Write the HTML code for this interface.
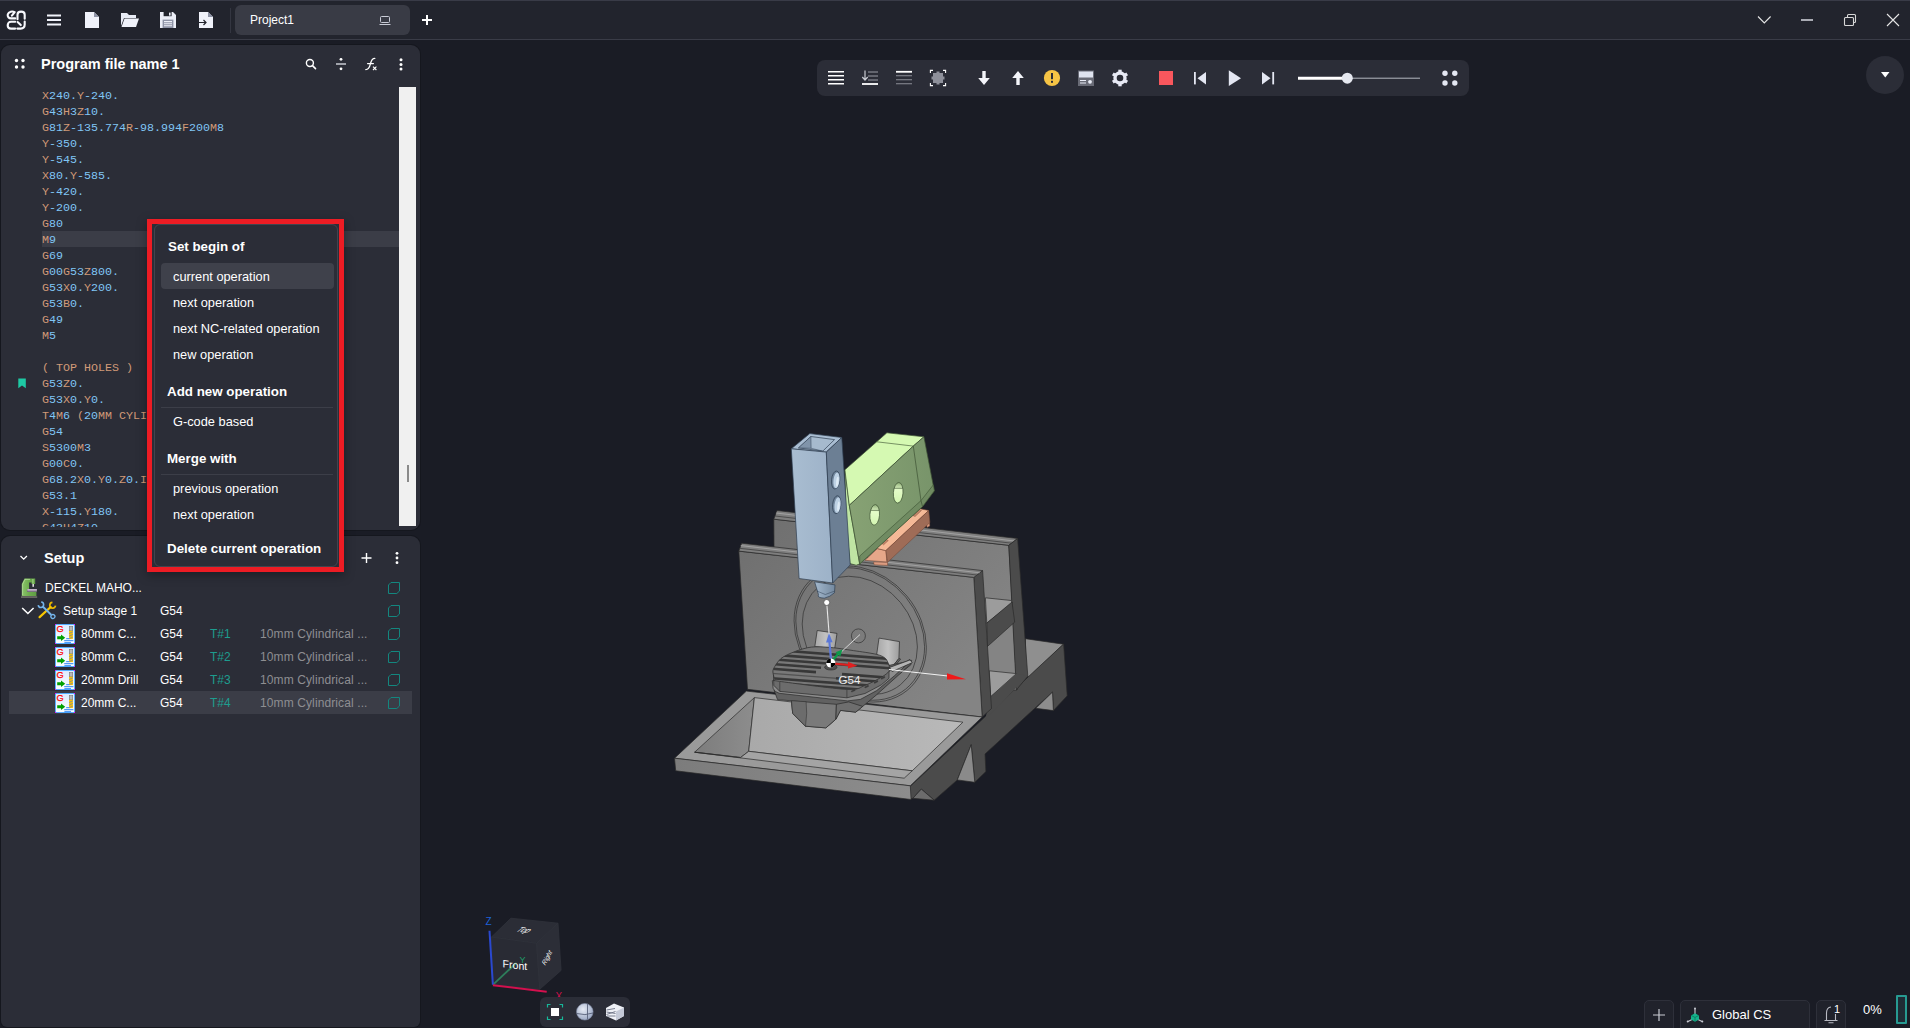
<!DOCTYPE html>
<html><head><meta charset="utf-8"><title>Project1</title>
<style>
*{box-sizing:border-box;margin:0;padding:0}
html,body{width:1910px;height:1028px;overflow:hidden;background:#1a1c25;font-family:"Liberation Sans",Arial,sans-serif;color:#fff}
body{position:relative}
svg{position:absolute;overflow:visible}
#titlebar{position:absolute;left:0;top:0;width:1910px;height:40px;background:#22242d;border-top:1px solid #393b47;border-bottom:1px solid #3a3c47}
#tab{position:absolute;left:235px;top:4px;width:175px;height:30px;background:#393b45;border-radius:6px}
#tab span{position:absolute;left:15px;top:8px;font-size:12px;color:#fff}
.panel{position:absolute;background:#2b2d37;border-radius:9px;box-shadow:0 0 0 1px #15171e}
#p1{left:1px;top:45px;width:419px;height:485px}
#p2{left:1px;top:536px;width:419px;height:491px;border-radius:9px 9px 6px 6px}
.ptitle{position:absolute;font-weight:bold;font-size:14.5px;color:#fff;white-space:nowrap;line-height:18px}
#code{position:absolute;left:41px;top:42px;width:358px;height:440px;overflow:hidden;font-family:"Liberation Mono","DejaVu Sans Mono",monospace;font-size:11.67px;line-height:16px;color:#d19a78;white-space:pre}
#code b{font-weight:normal;color:#80c6f5}
#code i{font-style:normal;display:block;height:16px;line-height:19px}
#code i.hl{background:#3b3d47}
#sb{position:absolute;left:398px;top:42px;width:17px;height:439px;background:#f0f0f0}
#sbt{position:absolute;left:406px;top:420px;width:2px;height:17px;background:#8a8a8a}
.row{position:absolute;left:8px;width:403px;height:23px;font-size:12px;color:#fff;white-space:nowrap}
.row span{position:absolute;top:5px;line-height:15px}
.row .t{color:#1d9d8f}
.row .d{color:#8e8e92;letter-spacing:.11px}
.row.sel{background:#3b3d47}
#menu{position:absolute;left:147px;top:219px;width:197px;height:353px;border:5px solid #ed1c24;background:#2b2d37;box-shadow:0 3px 10px rgba(0,0,0,.35)}
#menuin{position:absolute;left:2px;top:0px;width:184px;height:343px;border:1px solid #42444e;border-radius:6px}
.mh{position:absolute;font-weight:bold;font-size:13.35px;color:#fff;white-space:nowrap;line-height:16px}
.mi{position:absolute;left:173px;font-size:12.8px;color:#fff;white-space:nowrap;line-height:16px}
.msep{position:absolute;left:161px;width:172px;height:1px;background:#3c3e48}
.mhl{position:absolute;left:161px;top:263px;width:173px;height:26px;background:#3f414b;border-radius:4px}
#tb{position:absolute;left:817px;top:60px;width:652px;height:36px;background:#2b2d37;border-radius:8px}
#circ{position:absolute;left:1866px;top:56px;width:38px;height:38px;border-radius:19px;background:#2b2d37}
#vb{position:absolute;left:540px;top:997px;width:90px;height:30px;background:#2b2d37;border-radius:6px}
.bb{position:absolute;top:1000px;height:30px;background:#20222b;border:1px solid #2e303a;border-radius:5px 5px 0 0}

</style></head><body>
<div id="titlebar">
 <div id="tab"><span>Project1</span></div>
</div>
<svg style="left:0;top:0" width="1910" height="40" viewBox="0 0 1910 40">
 <!-- logo -->
 <g fill="none" stroke="#f8f9fd" stroke-width="2.1" stroke-linecap="round" stroke-linejoin="round">
  <path d="M11.9 15.6L14.7 12.1C12.5 11 8.6 11.4 7.8 14.2C7.2 16.8 8.8 18.4 11 18.4H15.2"/>
  <path d="M17.5 19.2V14.8C17.5 10.6 24.7 10.6 24.7 14.8V18.8"/>
  <path d="M15.2 21.8H11C6.6 21.8 6.6 28.6 11 28.6H15.2"/>
  <path d="M24.7 21.5V24.6C24.7 27.4 23 28.6 20.6 28.6H17.3"/>
  <path d="M17.6 22L20.8 25.1"/>
 </g>
 <!-- hamburger -->
 <g stroke="#f1f3fa" stroke-width="2"><path d="M47 15.5H61M47 20H61M47 24.5H61"/></g>
 <!-- new file -->
 <path d="M85 12H94L99 17V28H85Z" fill="#f0f2fa"/><path d="M94 12V17H99Z" fill="#8e93a6"/>
 <!-- open folder -->
 <path d="M121 13H127L129 15H136V18H124L121 26Z" fill="#e8ebf5"/><path d="M124.5 18.5H139L136 27H121.5Z" fill="#f0f2fa"/>
 <!-- save -->
 <path d="M160 12H173L176 15V28H160Z" fill="#eceef7"/><rect x="163.6" y="12" width="8" height="4.2" fill="#22242d"/><rect x="169" y="12.6" width="1.6" height="3" fill="#eceef7"/><rect x="162.6" y="19.6" width="10.8" height="8.4" fill="#8e93a6"/><path d="M164 21.6H172M164 23.7H172M164 25.8H172" stroke="#eef0f8" stroke-width="1.1"/>
 <!-- export -->
 <path d="M199 12H208L213 17V28H199Z" fill="#f0f2fa"/><path d="M208 12V17H213Z" fill="#8e93a6"/><path d="M199 22.5H206M203.5 20L206 22.5L203.5 25" stroke="#22242d" stroke-width="1.2" fill="none"/>
 <rect x="230" y="8" width="1" height="25" fill="#343641"/>
 <!-- tab monitor icon -->
 <rect x="380.5" y="16.5" width="9" height="6" rx="1" fill="none" stroke="#c8cbd6" stroke-width="1"/><path d="M379.5 24.5H390.5" stroke="#c8cbd6" stroke-width="1"/>
 <!-- plus -->
 <path d="M422 20H432M427 15V25" stroke="#fff" stroke-width="2"/>
 <!-- window controls -->
 <path d="M1758 16.5L1764.3 23L1770.6 16.5" fill="none" stroke="#e6e6e6" stroke-width="1.1"/>
 <path d="M1801 20H1813" stroke="#a9abb3" stroke-width="2"/>
 <rect x="1844.5" y="17.5" width="9" height="8" rx="1" fill="none" stroke="#d8d8d8" stroke-width="1.1"/><path d="M1847.5 17.5V15.5Q1847.5 14.5 1848.5 14.5H1854.5Q1855.5 14.5 1855.5 15.5V21.5Q1855.5 22.5 1854.5 22.5H1853.5" fill="none" stroke="#d8d8d8" stroke-width="1.1"/>
 <path d="M1887 14L1899 26M1899 14L1887 26" stroke="#e6e6e6" stroke-width="1.1"/>
</svg>
<div id="circ"></div>
<svg style="left:1866px;top:56px" width="38" height="38" viewBox="0 0 38 38"><path d="M15 16H23.5L19.25 21.5Z" fill="#fff"/></svg>
<div class="panel" id="p1">
 <div class="ptitle" style="left:40px;top:10px">Program file name 1</div>
 <div id="code"><i>X<b>240.</b>Y<b>-240.</b></i><i>G<b>43</b>H<b>3</b>Z<b>10.</b></i><i>G<b>81</b>Z<b>-135.774</b>R<b>-98.994</b>F<b>200</b>M<b>8</b></i><i>Y<b>-350.</b></i><i>Y<b>-545.</b></i><i>X<b>80.</b>Y<b>-585.</b></i><i>Y<b>-420.</b></i><i>Y<b>-200.</b></i><i>G<b>80</b></i><i class="hl">M<b>9</b></i><i>G<b>69</b></i><i>G<b>00</b>G<b>53</b>Z<b>800.</b></i><i>G<b>53</b>X<b>0.</b>Y<b>200.</b></i><i>G<b>53</b>B<b>0.</b></i><i>G<b>49</b></i><i>M<b>5</b></i><i></i><i>( TOP HOLES )</i><i>G<b>53</b>Z<b>0.</b></i><i>G<b>53</b>X<b>0.</b>Y<b>0.</b></i><i>T<b>4</b>M<b>6</b> (<b>20</b>MM CYLINDRICAL FLAT END MILL)</i><i>G<b>54</b></i><i>S<b>5300</b>M<b>3</b></i><i>G<b>00</b>C<b>0.</b></i><i>G<b>68.2</b>X<b>0.</b>Y<b>0.</b>Z<b>0.</b>I<b>0.</b>J<b>0.</b>K<b>0.</b></i><i>G<b>53.1</b></i><i>X<b>-115.</b>Y<b>180.</b></i><i>G<b>43</b>H<b>4</b>Z<b>10.</b></i></div>
 <div id="sb"></div><div id="sbt"></div>
</div>
<svg style="left:0;top:45px" width="420" height="485" viewBox="0 45 420 485">
 <g fill="#fff"><circle cx="16.5" cy="60.5" r="1.7"/><circle cx="23" cy="60.5" r="1.7"/><circle cx="16.5" cy="67" r="1.7"/><circle cx="23" cy="67" r="1.7"/></g>
 <circle cx="309.9" cy="63" r="3.5" fill="none" stroke="#fff" stroke-width="1.4"/><path d="M312.5 65.6L315.5 68.6" stroke="#fff" stroke-width="1.6" stroke-linecap="round"/>
 <circle cx="341" cy="59.3" r="1.4" fill="#fff"/><circle cx="341" cy="68.8" r="1.4" fill="#fff"/><path d="M336 64H346" stroke="#d5d7de" stroke-width="1.4"/>
 <path d="M365.8 69.6C369.5 69.6 369.8 66 370.6 63.2C371.4 60.2 372 58.4 374.8 58.4M367.6 63.6H373.4" fill="none" stroke="#fff" stroke-width="1.3" stroke-linecap="round"/><path d="M373 66.6L376.4 70M376.4 66.6L373 70" stroke="#fff" stroke-width="1.1"/>
 <g fill="#fff"><circle cx="401" cy="59.7" r="1.5"/><circle cx="401" cy="64.4" r="1.5"/><circle cx="401" cy="69.1" r="1.5"/></g>
 <path d="M18.3 378.5H25.8V388.3L22 385.6L18.3 388.3Z" fill="#1ec9a4"/>
</svg>
<div class="panel" id="p2">
 <div class="ptitle" style="left:43px;top:13px">Setup</div>
 <div class="row" style="top:40px"><span style="left:36px">DECKEL MAHO...</span></div>
 <div class="row" style="top:63px"><span style="left:54px">Setup stage 1</span><span style="left:151px">G54</span></div>
 <div class="row" style="top:86px"><span style="left:72px">80mm C...</span><span style="left:151px">G54</span><span class="t" style="left:201px">T#1</span><span class="d" style="left:251px">10mm Cylindrical ...</span></div>
 <div class="row" style="top:109px"><span style="left:72px">80mm C...</span><span style="left:151px">G54</span><span class="t" style="left:201px">T#2</span><span class="d" style="left:251px">10mm Cylindrical ...</span></div>
 <div class="row" style="top:132px"><span style="left:72px">20mm Drill</span><span style="left:151px">G54</span><span class="t" style="left:201px">T#3</span><span class="d" style="left:251px">10mm Cylindrical ...</span></div>
 <div class="row sel" style="top:155px"><span style="left:72px">20mm C...</span><span style="left:151px">G54</span><span class="t" style="left:201px">T#4</span><span class="d" style="left:251px">10mm Cylindrical ...</span></div>
</div>
<svg style="left:0;top:536px" width="420" height="200" viewBox="0 536 420 200">
 <defs>
  <g id="chk"><path d="M3 0.5H11.5V9L8.8 11.5H0.5V3Z" fill="none" stroke="#13877f" stroke-width="1"/></g>
  <linearGradient id="opg" x1="0" y1="0" x2="0" y2="1"><stop offset="0" stop-color="#dcecff"/><stop offset="1" stop-color="#fbfdff"/></linearGradient>
  <g id="op">
   <rect x="0.5" y="0.5" width="19" height="19" fill="url(#opg)" stroke="#55adff" stroke-width="1"/>
   <rect x="0" y="0" width="1" height="1" fill="#f0f"/><rect x="19" y="0" width="1" height="1" fill="#f0f"/><rect x="0" y="19" width="1" height="1" fill="#f0f"/><rect x="19" y="19" width="1" height="1" fill="#f0f"/>
   <text x="1.6" y="8.4" font-family="Liberation Sans,sans-serif" font-size="9.2" fill="#ff0000" stroke="#ff0000" stroke-width=".25">G</text>
   <path d="M2.2 12.2H6V10.4L10.2 13.7L6 17V15.2H2.2Z" fill="#00a000"/>
   <rect x="14.3" y="2.5" width="3.4" height="4.3" fill="#b8b8b8" stroke="#777" stroke-width=".6"/><rect x="14.1" y="6.8" width="3.8" height="8.3" fill="#f5c400"/>
   <path d="M14.1 9.6L17.9 7.8M14.1 12.2L17.9 10.4M14.1 14.8L17.9 13" stroke="#8a8a9a" stroke-width=".9"/>
   <path d="M11.2 14.7H14.1M9.2 16.7H18.4M9.4 18.7H16" stroke="#1478f0" stroke-width=".9" fill="none"/>
  </g>
 </defs>
 <path d="M20.5 556L23.7 559.2L26.9 556" fill="none" stroke="#fff" stroke-width="1.3"/>
 <path d="M361.5 558H371.5M366.5 553V563" stroke="#fff" stroke-width="1.4"/>
 <g fill="#fff"><circle cx="397" cy="553.3" r="1.4"/><circle cx="397" cy="558" r="1.4"/><circle cx="397" cy="562.7" r="1.4"/></g>
 <!-- machine icon -->
 <defs><linearGradient id="mg" x1="0" y1="0" x2="1" y2="0"><stop offset="0" stop-color="#8cc46c"/><stop offset=".5" stop-color="#6ead4e"/><stop offset="1" stop-color="#5f9c44"/></linearGradient>
 <linearGradient id="mt" x1="0" y1="0" x2="0" y2="1"><stop offset="0" stop-color="#cdbdd4"/><stop offset="1" stop-color="#8f7d98"/></linearGradient></defs>
 <g>
  <path d="M21.8 596V584L24.5 578.6H35.2V584H31.6V582.5H29.1V589H27.2V591.7H36.4V596Z" fill="url(#mg)"/>
  <path d="M22.6 595V584.3L25 579.4H30" fill="none" stroke="#b7e29c" stroke-width=".9" opacity=".8"/>
  <rect x="32.2" y="579" width="1.4" height="4.6" fill="#a5d488" opacity=".8"/>
  <rect x="27.2" y="589" width="9.7" height="2.7" fill="url(#mt)"/>
  <rect x="32.4" y="584" width="1.6" height="2.8" fill="#d9d9d9"/>
  <rect x="21" y="596.2" width="16.2" height="1.7" fill="#6d6d66"/>
 </g>
 <!-- chevron + tools -->
 <path d="M22.2 608L27.9 613.5L33.6 608" fill="none" stroke="#fff" stroke-width="1.6"/>
 <g fill="none" transform="translate(52.6 605.3) rotate(137.7)">
  <path d="M-1.9 -2.3A2.9 2.9 0 1 1 -1.9 2.3" stroke="#e8b600" stroke-width="1.7"/>
  <path d="M2.6 0H17.6" stroke="#f7c600" stroke-width="2.2" stroke-linecap="round"/>
 </g>
 <g fill="none" transform="translate(41 604.8) rotate(44.5)">
  <path d="M-1.8 -2.1A2.7 2.7 0 1 1 -1.8 2.1" stroke="#74b4ea" stroke-width="1.6"/>
  <path d="M2.4 0H14.6" stroke="#74b4ea" stroke-width="1.9"/>
  <circle cx="16.7" cy="0" r="2" stroke="#74b4ea" stroke-width="1.3"/>
 </g>
 <use href="#op" x="55" y="624"/><use href="#op" x="55" y="647"/><use href="#op" x="55" y="670"/><use href="#op" x="55" y="693"/>
 <use href="#chk" x="388" y="582"/><use href="#chk" x="388" y="605"/><use href="#chk" x="388" y="628"/><use href="#chk" x="388" y="651"/><use href="#chk" x="388" y="674"/><use href="#chk" x="388" y="697"/>
</svg>
<div id="tb"></div>
<svg style="left:817px;top:60px" width="652" height="36" viewBox="817 60 652 36">
 <!-- 1 lines -->
 <path d="M828 71.8H844M828 75.8H844M828 79.8H844M828 83.8H844" stroke="#fff" stroke-width="1.5"/>
 <!-- 2 arrow lines -->
 <path d="M868 72H878M868 76H878M868 80H878" stroke="#9b9da6" stroke-width="1"/>
 <path d="M865 70.5V79.5M862.3 77L865 80L867.7 77" stroke="#c9cbd3" stroke-width="1.2" fill="none"/>
 <path d="M862 84H878" stroke="#fff" stroke-width="1.8"/>
 <!-- 3 lines -->
 <path d="M896 71.8H912" stroke="#fff" stroke-width="1.8"/><path d="M896 75.8H912M896 79.8H912M896 83.8H912" stroke="#8d8f98" stroke-width="1.1"/>
 <!-- 4 puzzle -->
 <path d="M933 73H936.5V71.5H939.5V73H943V76.5H944.5V79.5H943V83H939.5V84.5H936.5V83H933V79.5H931.5V76.5H933Z" fill="#8e909a"/>
 <path d="M930.4 73V70.4H933M943 70.4H945.6V73M945.6 83V85.6H943M933 85.6H930.4V83" fill="none" stroke="#fff" stroke-width="1.1"/>
 <!-- 5/6 arrows -->
 <path d="M982.3 71H985.7V78H989.8L984 85L978.2 78H982.3Z" fill="#f4f5fa"/>
 <path d="M1016.3 85H1019.7V78H1023.8L1018 71L1012.2 78H1016.3Z" fill="#f4f5fa"/>
 <!-- 7 warn -->
 <circle cx="1052" cy="78" r="8.1" fill="#f6c445"/><rect x="1051" y="73" width="2" height="6.2" fill="#2b2d37"/><rect x="1051" y="80.8" width="2" height="2" fill="#2b2d37"/>
 <!-- 8 card -->
 <rect x="1078" y="70.5" width="16" height="15.5" fill="#696b76"/><rect x="1079" y="71.5" width="14" height="6" fill="#dfe3ef"/><path d="M1080 80.5H1086M1080 83H1086" stroke="#e9ecf6" stroke-width="1"/><circle cx="1090" cy="81.8" r="1.9" fill="#e9ecf6"/>
 <!-- 9 gear -->
 <g transform="translate(1120 78)"><circle r="5" fill="none" stroke="#e8eaf5" stroke-width="3.4"/>
  <g fill="#e8eaf5"><rect x="-1.7" y="-8.3" width="3.4" height="3.5"/><rect x="-1.7" y="4.8" width="3.4" height="3.5"/>
  <rect x="-1.7" y="-8.3" width="3.4" height="3.5" transform="rotate(60)"/><rect x="-1.7" y="4.8" width="3.4" height="3.5" transform="rotate(60)"/>
  <rect x="-1.7" y="-8.3" width="3.4" height="3.5" transform="rotate(120)"/><rect x="-1.7" y="4.8" width="3.4" height="3.5" transform="rotate(120)"/></g></g>
 <!-- 10 stop -->
 <rect x="1159" y="71" width="14" height="14" fill="#f9575d"/>
 <!-- 11 prev -->
 <rect x="1194" y="72" width="1.8" height="12.4" fill="#e4e7f2"/><path d="M1206 72V84.4L1197.5 78.2Z" fill="#e4e7f2"/>
 <!-- 12 play -->
 <path d="M1228.8 70.3V86L1241 78.2Z" fill="#e4e7f2"/>
 <!-- 13 next -->
 <rect x="1272.3" y="72" width="1.8" height="12.4" fill="#e4e7f2"/><path d="M1262 72V84.4L1270.5 78.2Z" fill="#e4e7f2"/>
 <!-- slider -->
 <path d="M1347 78.2H1420" stroke="#b6b8c0" stroke-width="1"/><path d="M1298 78.2H1347" stroke="#fff" stroke-width="3"/><circle cx="1347.3" cy="78.2" r="5.5" fill="#e6e8f0"/>
 <!-- dots -->
 <g fill="#e4e7f2"><circle cx="1445" cy="73.2" r="2.7"/><circle cx="1454.8" cy="73.2" r="2.7"/><circle cx="1445" cy="83" r="2.7"/><circle cx="1454.8" cy="83" r="2.7"/></g>
</svg>
<svg style="left:0;top:0" width="1910" height="1028" viewBox="0 0 1910 1028"><defs>
<linearGradient id="gw" x1="0" y1="0" x2="1" y2="0.6"><stop offset="0" stop-color="#707070"/><stop offset="1" stop-color="#848484"/></linearGradient>
<linearGradient id="gf" x1="0" y1="0" x2="1" y2="0"><stop offset="0" stop-color="#a9a9a9"/><stop offset="1" stop-color="#b9b9b9"/></linearGradient>
<linearGradient id="gfr" x1="0" y1="0" x2="1" y2="0"><stop offset="0" stop-color="#7c7c7c"/><stop offset="1" stop-color="#8d8d8d"/></linearGradient>
<linearGradient id="gsp" x1="0" y1="0" x2="1" y2="0"><stop offset="0" stop-color="#a9bdd1"/><stop offset="1" stop-color="#9db2c8"/></linearGradient>
<linearGradient id="ggr" x1="0" y1="0" x2="1" y2="0"><stop offset="0" stop-color="#87a274"/><stop offset="1" stop-color="#78946a"/></linearGradient>
<linearGradient id="ghole" x1="0" y1="0" x2="0" y2="1"><stop offset="0" stop-color="#8fae78"/><stop offset=".35" stop-color="#e4fcc9"/><stop offset="1" stop-color="#d2f5b0"/></linearGradient>
</defs>
<polygon points="1025.4,638.7 1063.5,644.2 1029.0,677.0 1026.0,676.0" fill="#8f8f8f" stroke="#2a2a2a" stroke-width="0.7" stroke-linejoin="round" />
<polygon points="910.2,786.3 1063.6,644.0 1067.2,695.8 1053.4,710.6 1052.5,692.1 985.0,754.0 985.9,771.5 974.8,782.3 971.2,744.7 957.3,779.9 934.2,800.2 921.3,789.1 912.9,798.3 910.2,798.9" fill="#4b4b4b" stroke="#2a2a2a" stroke-width="0.7" stroke-linejoin="round" />
<polygon points="957.3,779.9 971.2,744.7 974.8,782.3" fill="#8a8a8a" stroke="#2a2a2a" stroke-width="0.7" stroke-linejoin="round" />
<polygon points="1035.8,708.3 1052.5,692.1 1053.4,710.6" fill="#8d8d8d" stroke="#2a2a2a" stroke-width="0.7" stroke-linejoin="round" />
<polygon points="912.9,798.3 921.3,789.1 934.2,800.2" fill="#6c6c6c" stroke="#2a2a2a" stroke-width="0.7" stroke-linejoin="round" />
<polygon points="773.8,519.2 1008.8,545.3 1017.0,690.0 775.0,690.0" fill="url(#gw)" stroke="#2a2a2a" stroke-width="0.7" stroke-linejoin="round" />
<polygon points="773.8,519.2 777.0,510.5 1017.6,538.5 1008.8,545.3" fill="#7e7e7e" stroke="#2a2a2a" stroke-width="0.7" stroke-linejoin="round" />
<polyline points="775.0,516.0 1011.5,543.2" fill="none" stroke="#3a3a3a" stroke-width="0.7" />
<polyline points="776.0,513.0 1014.5,541.0" fill="none" stroke="#b0b0b0" stroke-width="0.7" />
<polygon points="1008.8,545.3 1017.6,538.5 1027.8,676.0 1016.4,690.0" fill="#4b4b4b" stroke="#2a2a2a" stroke-width="0.7" stroke-linejoin="round" />
<polygon points="985.4,597.8 1011.3,600.5 1012.1,603.2 986.8,623.1" fill="#9c9c9c" stroke="#2a2a2a" stroke-width="0.7" stroke-linejoin="round" />
<polygon points="986.8,623.1 1012.0,602.0 1014.7,622.1 987.4,646.5" fill="#4b4b4b" stroke="#2a2a2a" stroke-width="0.7" stroke-linejoin="round" />
<polygon points="989.3,670.8 1016.4,673.6 990.6,696.7" fill="#9c9c9c" stroke="#2a2a2a" stroke-width="0.7" stroke-linejoin="round" />
<polygon points="990.6,696.7 1016.4,673.6 1027.8,676.0 985.0,720.0" fill="#4b4b4b" stroke="none" stroke-width="0.7" stroke-linejoin="round" />
<polygon points="973.8,577.4 982.6,570.6 991.5,708.5 982.2,717.0" fill="#4b4b4b" stroke="#2a2a2a" stroke-width="0.7" stroke-linejoin="round" />
<polygon points="738.8,551.1 973.8,577.4 982.2,717.0 747.5,689.3" fill="url(#gw)" stroke="#2a2a2a" stroke-width="0.7" stroke-linejoin="round" />
<polygon points="738.8,551.1 741.7,543.2 982.6,570.6 973.8,577.4" fill="#7e7e7e" stroke="#2a2a2a" stroke-width="0.7" stroke-linejoin="round" />
<polyline points="739.8,548.3 976.8,575.0" fill="none" stroke="#3a3a3a" stroke-width="0.7" />
<polyline points="740.8,545.6 979.8,572.8" fill="none" stroke="#b0b0b0" stroke-width="0.7" />
<g fill="none" stroke="#3a3a3a" stroke-width="0.8"><circle r="1" transform="matrix(66.15 13.2 0 66.76 860.2 634)" vector-effect="non-scaling-stroke"/><circle r="1" transform="matrix(64.4 12.85 0 65 860.2 634)" vector-effect="non-scaling-stroke"/><circle r="1" transform="matrix(57.6 11.5 0 58.1 859.8 635.5)" vector-effect="non-scaling-stroke"/></g>
<circle cx="858.4" cy="635.9" r="7" fill="none" stroke="#3a3a3a" stroke-width=".8"/>
<polygon points="674.5,758.2 746.4,691.1 982.2,717.0 910.3,785.8" fill="#9a9a9a" stroke="#2a2a2a" stroke-width="0.7" stroke-linejoin="round" />
<polygon points="694.6,752.2 754.4,697.6 748.7,751.3 740.6,757.5" fill="url(#gfr)" stroke="#2a2a2a" stroke-width="0.7" stroke-linejoin="round" />
<polygon points="754.4,697.6 962.9,722.2 912.2,770.8 748.7,751.3" fill="url(#gf)" stroke="#2a2a2a" stroke-width="0.7" stroke-linejoin="round" />
<polygon points="694.6,752.2 740.6,757.5 748.7,751.3 912.2,770.8 904.2,778.2" fill="#a4a4a4" stroke="#2a2a2a" stroke-width="0.7" stroke-linejoin="round" />
<polygon points="674.5,758.2 910.3,785.8 911.1,799.5 675.7,770.8" fill="url(#gfr)" stroke="#2a2a2a" stroke-width="0.7" stroke-linejoin="round" />
<polygon points="873.5,561.9 887.5,562.3 887.6,565.4 874.2,564.8" fill="#dc9c80" stroke="#7a4a38" stroke-width="0.5" stroke-linejoin="round" />
<polygon points="926.5,524.0 929.5,522.5 929.8,526.0 927.0,527.5" fill="#dc9c80" stroke="#7a4a38" stroke-width="0.4" stroke-linejoin="round" />
<polygon points="864.9,560.3 877.4,548.6 885.9,550.6 886.9,562.0" fill="#e6a789" stroke="#7a4a38" stroke-width="0.6" stroke-linejoin="round" />
<polygon points="870.0,548.0 915.0,506.0 920.9,508.9 928.7,510.5 885.9,550.6 877.4,548.6" fill="#f5b997" stroke="#7a4a38" stroke-width="0.6" stroke-linejoin="round" />
<polygon points="885.9,550.6 928.7,510.5 929.9,522.6 887.5,562.3" fill="#9f6c57" stroke="#7a4a38" stroke-width="0.6" stroke-linejoin="round" />
<polygon points="882.0,543.6 886.6,539.5 888.3,540.6 883.6,544.8" fill="#c08468" stroke="#7a4a38" stroke-width="0.4" stroke-linejoin="round" />
<polygon points="913.0,515.5 919.5,509.5 921.5,510.5 915.0,516.6" fill="#c08468" stroke="#7a4a38" stroke-width="0.4" stroke-linejoin="round" />
<polygon points="844.9,469.8 849.3,505.3 859.7,563.9 856.2,565.2 850.0,563.6 846.0,520.0" fill="#bfe5a3" stroke="#3d5233" stroke-width="0.7" stroke-linejoin="round" />
<polygon points="844.9,469.8 886.9,432.8 923.9,436.8 913.3,446.1 849.3,505.3" fill="#d5f9b2" stroke="#3d5233" stroke-width="0.7" stroke-linejoin="round" />
<polyline points="876.8,441.8 913.3,446.1" fill="none" stroke="#4d6440" stroke-width="0.7" />
<polygon points="849.3,505.3 913.3,446.1 923.9,436.8 934.3,490.8 922.5,506.6 859.7,563.9" fill="url(#ggr)" stroke="#3d5233" stroke-width="0.7" stroke-linejoin="round" />
<polygon points="859.7,556.1 921.0,500.6 933.4,484.8 934.3,490.8 922.5,506.6 859.7,563.9" fill="#708b62" stroke="#3d5233" stroke-width="0.6" stroke-linejoin="round" />
<polyline points="913.3,446.1 921.0,500.6 922.5,506.6" fill="none" stroke="#3d5233" stroke-width="0.7" />
<ellipse cx="874.7" cy="514.9" rx="4.8" ry="10.3" fill="url(#ghole)" stroke="#3d5233" stroke-width=".7" transform="rotate(4 874.7 514.9)"/>
<path d="M870.5 510.4H879.1" stroke="#3d5233" stroke-width=".6"/>
<ellipse cx="898.2" cy="492.8" rx="4.8" ry="10.3" fill="url(#ghole)" stroke="#3d5233" stroke-width=".7" transform="rotate(4 898.2 492.8)"/>
<path d="M894.0 488.3H902.6" stroke="#3d5233" stroke-width=".6"/>
<linearGradient id="gbr" x1="0" y1="0" x2="1" y2="0"><stop offset="0" stop-color="#a6a6a6"/><stop offset=".5" stop-color="#c2c2c2"/><stop offset="1" stop-color="#9c9c9c"/></linearGradient>
<polygon points="817.2,630.5 837.0,633.4 834.7,648.6 814.8,646.6" fill="url(#gbr)" stroke="#2a2a2a" stroke-width="0.7" stroke-linejoin="round" />
<polygon points="879.0,638.1 899.5,641.6 898.9,658.5 891.9,667.3 876.7,654.4" fill="url(#gbr)" stroke="#2a2a2a" stroke-width="0.7" stroke-linejoin="round" />
<polygon points="898.9,658.5 900.6,659.1 893.0,667.8 891.9,667.3" fill="#6a6a6a" stroke="#2a2a2a" stroke-width="0.7" stroke-linejoin="round" />
<polygon points="889.5,669.6 911.7,660.3 910.8,664.9 876.7,691.2 865.0,694.7" fill="#8c8c8c" stroke="#2a2a2a" stroke-width="0.7" stroke-linejoin="round" />
<polygon points="774.0,690.0 777.5,699.6 791.5,700.8 792.7,713.4 805.5,726.2 825.9,727.9 835.9,719.2 840.5,710.4 855.7,712.2 862.7,706.4 876.7,694.7 910.5,664.3 910.5,660.8" fill="#616161" stroke="#2a2a2a" stroke-width="0.7" stroke-linejoin="round" />
<polygon points="791.5,700.8 792.7,713.4 805.5,726.2 825.9,727.9 835.9,719.2 836.4,704.3" fill="#7a7a7a" stroke="#2a2a2a" stroke-width="0.7" stroke-linejoin="round" />
<polygon points="791.5,700.8 792.7,713.4 805.5,726.2 806.7,713.4 806.1,701.7" fill="#6c6c6c" stroke="#2a2a2a" stroke-width="0.5" stroke-linejoin="round" />
<polygon points="836.4,704.3 848.7,701.9 862.7,706.4 855.7,712.2 840.5,710.4 835.9,719.2" fill="#6e6e6e" stroke="#2a2a2a" stroke-width="0.7" stroke-linejoin="round" />
<path d="M772.3 680.7 L773.1 688.3 L775.2 691.4 L779.3 693.3 L847.5 700.9 L860.4 699.4 L876.7 690.6 L894.2 676.0 L910.5 661.1 L910.0 659.4 L889.0 671.3Z" fill="#8c8c8c" stroke="#2a2a2a" stroke-width=".7"/>
<path d="M773.4 671.3 L773.8 685.4 L779.8 691.4 L846.9 697.8 L865.0 693.5 L881.4 684.8 L889.0 678.3 L889.0 671.3Z" fill="#6c6c6c" stroke="#2a2a2a" stroke-width=".7"/>
<polyline points="846.9,689.4 846.9,697.8" fill="none" stroke="#2a2a2a" stroke-width="0.6" />
<polyline points="779.8,681.9 779.8,691.4" fill="none" stroke="#2a2a2a" stroke-width="0.6" />
<polygon points="851.3,691.0 854.8,689.1 855.2,690.5 851.7,692.1" fill="#3e3e3e" stroke="#2a2a2a" stroke-width="0.3" stroke-linejoin="round" />
<polygon points="864.7,686.9 868.2,685.0 868.6,686.4 865.1,688.0" fill="#3e3e3e" stroke="#2a2a2a" stroke-width="0.3" stroke-linejoin="round" />
<polygon points="874.0,682.2 877.5,680.3 878.0,681.7 874.5,683.4" fill="#3e3e3e" stroke="#2a2a2a" stroke-width="0.3" stroke-linejoin="round" />
<polygon points="881.0,678.1 884.5,676.2 885.0,677.6 881.5,679.3" fill="#3e3e3e" stroke="#2a2a2a" stroke-width="0.3" stroke-linejoin="round" />
<clipPath id="tclip"><path d="M773.4 669.0 C774.6 666.6 777.8 661.1 781.0 658.5 C784.2 655.9 790.5 653.2 795.0 651.5 C799.6 649.8 806.1 647.7 811.3 647.1 C816.6 646.5 823.7 646.9 830.0 647.4 C836.3 647.9 846.4 649.5 853.4 650.6 C860.4 651.6 871.9 653.2 876.7 654.4 C881.5 655.6 883.6 656.8 885.5 658.5 C887.3 660.2 888.4 663.6 889.0 665.5 C889.5 667.4 890.1 669.6 889.0 671.3 C887.8 673.1 885.0 675.1 881.4 677.2 C877.8 679.3 870.2 683.5 865.0 685.4 C859.9 687.2 859.8 690.0 846.9 689.4 C834.1 688.8 790.0 682.8 779.3 681.3 C768.5 679.8 776.0 680.5 775.2 679.5 C774.3 678.6 773.7 676.4 773.4 674.8 C773.2 673.3 772.3 671.5 773.4 669.0Z"/></clipPath>
<path d="M773.4 669.0 C774.6 666.6 777.8 661.1 781.0 658.5 C784.2 655.9 790.5 653.2 795.0 651.5 C799.6 649.8 806.1 647.7 811.3 647.1 C816.6 646.5 823.7 646.9 830.0 647.4 C836.3 647.9 846.4 649.5 853.4 650.6 C860.4 651.6 871.9 653.2 876.7 654.4 C881.5 655.6 883.6 656.8 885.5 658.5 C887.3 660.2 888.4 663.6 889.0 665.5 C889.5 667.4 890.1 669.6 889.0 671.3 C887.8 673.1 885.0 675.1 881.4 677.2 C877.8 679.3 870.2 683.5 865.0 685.4 C859.9 687.2 859.8 690.0 846.9 689.4 C834.1 688.8 790.0 682.8 779.3 681.3 C768.5 679.8 776.0 680.5 775.2 679.5 C774.3 678.6 773.7 676.4 773.4 674.8 C773.2 673.3 772.3 671.5 773.4 669.0Z" fill="#787878" stroke="#2a2a2a" stroke-width=".7"/>
<g clip-path="url(#tclip)" stroke="#383838" stroke-width="2.6"><path d="M760 648.9L900 659.6"/><path d="M760 653.7L900 664.3"/><path d="M760 658.4L900 669.0"/><path d="M760 663.1L821 667.7"/><path d="M760 667.8L816 672.1M842 674.1L900 678.5"/><path d="M836 678.3L900 683.2"/><path d="M760 672.5L900 683.2" stroke-width="1.2" opacity=".6"/><path d="M760 677.3L900 687.9"/><path d="M760 682.0L900 692.6"/><path d="M760 686.7L900 697.3"/></g>
<ellipse cx="830.8" cy="667.3" rx="6.2" ry="2.7" fill="#505050" stroke="#2a2a2a" stroke-width=".6"/>
<polygon points="889.7,667.4 910.0,660.0 912.3,662.6 892.0,671.6" fill="#b4b4b4" stroke="#2a2a2a" stroke-width="0.7" stroke-linejoin="round" />
<polygon points="791.3,448.8 809.8,433.6 841.8,437.5 826.3,452.1" fill="#a9bdd2" stroke="#2f3f52" stroke-width="0.7" stroke-linejoin="round" />
<polygon points="798.5,447.9 810.9,436.5 834.5,439.6 822.8,451.1" fill="#a6bace" stroke="#2f3f52" stroke-width="0.7" stroke-linejoin="round" />
<polygon points="798.5,447.9 810.9,436.5 811.1,448.3" fill="#8094aa" stroke="#2f3f52" stroke-width="0.5" stroke-linejoin="round" />
<polyline points="811.1,448.3 822.8,451.1" fill="none" stroke="#2f3f52" stroke-width="0.5" />
<polygon points="791.3,448.8 826.3,452.1 832.7,583.0 799.1,578.5" fill="url(#gsp)" stroke="#2f3f52" stroke-width="0.7" stroke-linejoin="round" />
<polygon points="826.3,452.1 841.8,437.5 850.2,564.9 832.7,583.0" fill="#6c7f94" stroke="#2f3f52" stroke-width="0.7" stroke-linejoin="round" />
<ellipse cx="835.6" cy="480" rx="4.1" ry="9" fill="#70859b" stroke="#2f3f52" stroke-width=".7" transform="rotate(6 835.6 480)"/>
<ellipse cx="836.5" cy="480.3" rx="3" ry="8" fill="#bdd1e4" transform="rotate(6 835.6 480)"/>
<ellipse cx="837.5" cy="481.5" rx="1.2" ry="5" fill="#deebf6" transform="rotate(6 835.6 480)"/>
<ellipse cx="836.7" cy="504.7" rx="4.1" ry="9" fill="#70859b" stroke="#2f3f52" stroke-width=".7" transform="rotate(6 836.7 504.7)"/>
<ellipse cx="837.6" cy="505.0" rx="3" ry="8" fill="#bdd1e4" transform="rotate(6 836.7 504.7)"/>
<ellipse cx="838.6" cy="506.2" rx="1.2" ry="5" fill="#deebf6" transform="rotate(6 836.7 504.7)"/>
<linearGradient id="ghd" x1="0" y1="0" x2="1" y2="0"><stop offset="0" stop-color="#a3b8cd"/><stop offset="1" stop-color="#74899f"/></linearGradient>
<path d="M814.6 581.8 L835.0 584.9 L834.5 592.7 Q830.2 597.0 824.3 598.2 Q816.5 597.7 818.5 594.7 Z" fill="url(#ghd)" stroke="#2f3f52" stroke-width=".7"/>
<polyline points="817.1,591.1 825.3,594.5 834.5,591.1" fill="none" stroke="#2f3f52" stroke-width="0.5" />
<polyline points="826.7,602.5 830.8,656.0" fill="none" stroke="#e8e8e8" stroke-width="1.1" />
<polyline points="838.0,655.0 860.0,634.5" fill="none" stroke="#e0e0e0" stroke-width="0.9" />
<circle cx="826.7" cy="602.5" r="3" fill="#fff" stroke="#444" stroke-width=".7"/>
<polyline points="889.0,669.5 948.0,676.0" fill="none" stroke="#f2f2f2" stroke-width="1.1" />
<polygon points="947.0,673.3 966.0,679.2 947.0,679.4" fill="#f01818" stroke="none" stroke-width="0.7" stroke-linejoin="round" />
<polyline points="831.0,660.0 829.3,640.0" fill="none" stroke="#5b78d8" stroke-width="2.2" />
<polygon points="826.0,642.5 829.0,633.0 832.6,642.3" fill="#5b78d8" stroke="none" stroke-width="0.7" stroke-linejoin="round" />
<polyline points="833.0,660.0 838.0,654.0" fill="none" stroke="#0c9a4a" stroke-width="2.2" />
<polygon points="835.5,652.3 842.5,649.5 840.3,656.5" fill="#0c9a4a" stroke="none" stroke-width="0.7" stroke-linejoin="round" />
<polyline points="834.0,663.6 849.0,665.0" fill="none" stroke="#e02020" stroke-width="2.2" />
<polygon points="848.0,661.8 857.3,665.8 848.0,668.6" fill="#e02020" stroke="none" stroke-width="0.7" stroke-linejoin="round" />
<circle cx="830.8" cy="663" r="4.6" fill="#fff"/><path d="M830.8 663V658.4A4.6 4.6 0 0 0 826.2 663ZM830.8 663V667.6A4.6 4.6 0 0 0 835.4 663Z" fill="#000"/>
<text x="838.6" y="683.6" font-family="Liberation Sans,sans-serif" font-size="11.6" fill="#ededed">G54</text></svg>
<svg style="left:480px;top:910px" width="100" height="100" viewBox="480 910 100 100">
 <path d="M491.4 937.1L510.9 918.2L558 923.2L536.6 943.3Z" fill="#2b2d36" stroke="#30323b" stroke-width=".8"/>
 <path d="M491.4 937.1L536.6 943.3L539.8 989.2L492.9 984.8Z" fill="#292b34" stroke="#30323b" stroke-width=".8"/>
 <path d="M536.6 943.3L558 923.2L561.1 970.4L539.8 989.2Z" fill="#2c2e37" stroke="#30323b" stroke-width=".8"/>
 <path d="M493.3 984.4L516.5 962.8" stroke="#2e7d5b" stroke-width="1.8"/>
 <path d="M489.5 930.8L492.9 984.8" stroke="#2a48cf" stroke-width="2"/>
 <path d="M492.9 985.2L546.7 991.7" stroke="#d3104e" stroke-width="2"/>
 <text x="485.6" y="925.2" font-family="Liberation Sans,sans-serif" font-size="10" fill="#1d62d8">Z</text>
 <text x="555.6" y="999.6" font-family="Liberation Sans,sans-serif" font-size="10" fill="#d3104e">X</text>
 <text x="519.5" y="962.5" font-family="Liberation Sans,sans-serif" font-size="9" fill="#1f9e6a">Y</text>
 <text transform="translate(502.6 967.2) skewY(7)" font-family="Liberation Sans,sans-serif" font-size="10.6" fill="#fff">Front</text>
 <text transform="translate(515.5 931.5) rotate(7) skewX(-42)" font-family="Liberation Sans,sans-serif" font-size="7.6" font-style="italic" fill="#fff">Top</text>
 <text transform="translate(545 966) rotate(-62) skewX(-20)" font-family="Liberation Sans,sans-serif" font-size="6.5" fill="#fff">Right</text>
</svg>
<div id="vb"></div>
<div class="bb" style="left:1644px;width:30px"></div>
<div class="bb" style="left:1680px;width:130px"></div>
<div class="bb" style="left:1816px;width:30px"></div>
<div style="position:absolute;left:1712px;top:1007px;font-size:13px;line-height:16px;color:#fff">Global CS</div>
<div style="position:absolute;left:1863px;top:1002px;font-size:13px;line-height:16px;color:#fff">0%</div>
<div style="position:absolute;left:1896px;top:995px;width:11px;height:29px;border:2px solid #279a92;background:#1f2b35;border-radius:1px"></div>
<svg style="left:0;top:990px" width="1910" height="38" viewBox="0 990 1910 38">
 <!-- view icons -->
 <rect x="551" y="1008" width="8" height="8" fill="#fff"/>
 <path d="M547.5 1007.5V1004.5H550.5M559.5 1004.5H562.5V1007.5M562.5 1016.5V1019.5H559.5M550.5 1019.5H547.5V1016.5" fill="none" stroke="#17b79a" stroke-width="1.2"/>
 <defs><radialGradient id="sph" cx="40%" cy="35%" r="70%"><stop offset="0" stop-color="#e6ebf5"/><stop offset="1" stop-color="#9aa7c2"/></radialGradient></defs>
 <circle cx="584.8" cy="1011.8" r="8.3" fill="url(#sph)" stroke="#7d88a3" stroke-width=".6"/>
 <path d="M587.5 1004V1019.5M576.8 1013.5Q585 1016 593 1013" fill="none" stroke="#59627a" stroke-width=".9"/>
 <path d="M606 1008L614 1003.5L624 1007.5V1016L616 1020.5L606 1016Z" fill="#eef0f6"/>
 <path d="M616 1011.5L624 1007.5V1016L616 1020.5Z" fill="#c5cad8"/>
 <path d="M606.5 1010L615 1008.5M606.5 1012L615.5 1013.5M606.5 1014.5L615.5 1011.5M607 1016L615.5 1016" stroke="#6c7284" stroke-width=".9"/>
 <!-- plus -->
 <path d="M1653 1015H1665M1659 1009V1021" stroke="#c9cbd3" stroke-width="1.2"/>
 <!-- cs icon -->
 <path d="M1695 1009V1014M1695 1018L1688 1021.5M1695 1018L1702 1021.5" stroke="#c9cbd3" stroke-width="1.1"/>
 <path d="M1695 1013.2L1699 1015.4V1019.6L1695 1021.8L1691 1019.6V1015.4Z" fill="#14b38c"/><path d="M1695 1017.4V1021.8M1695 1017.4L1691 1015.4M1695 1017.4L1699 1015.4" stroke="#0b6e57" stroke-width=".7"/>
 <circle cx="1695" cy="1008.6" r="1" fill="#c9cbd3"/><circle cx="1687.7" cy="1021.6" r="1" fill="#c9cbd3"/><circle cx="1702.3" cy="1021.6" r="1" fill="#c9cbd3"/>
 <!-- bell -->
 <path d="M1824.5 1020.5H1837.5M1826.5 1020V1013Q1826.5 1007.5 1831 1007M1835.5 1014V1020M1828.5 1022.8H1833.5" fill="none" stroke="#b9bbc4" stroke-width="1.1"/>
 <text x="1834" y="1012.5" font-family="Liberation Sans,sans-serif" font-size="11" fill="#fff">1</text>
</svg>
<div id="menu"><div id="menuin"></div></div>
<div class="mhl"></div>
<div class="mh" style="left:168px;top:239px">Set begin of</div>
<div class="mi" style="top:269px">current operation</div>
<div class="mi" style="top:295px">next operation</div>
<div class="mi" style="top:321px">next NC-related operation</div>
<div class="mi" style="top:347px">new operation</div>
<div class="mh" style="left:167px;top:384px">Add new operation</div>
<div class="msep" style="top:407px"></div>
<div class="mi" style="top:414px">G-code based</div>
<div class="mh" style="left:167px;top:451px">Merge with</div>
<div class="msep" style="top:474px"></div>
<div class="mi" style="top:481px">previous operation</div>
<div class="mi" style="top:507px">next operation</div>
<div class="mh" style="left:167px;top:541px">Delete current operation</div>

</body></html>
